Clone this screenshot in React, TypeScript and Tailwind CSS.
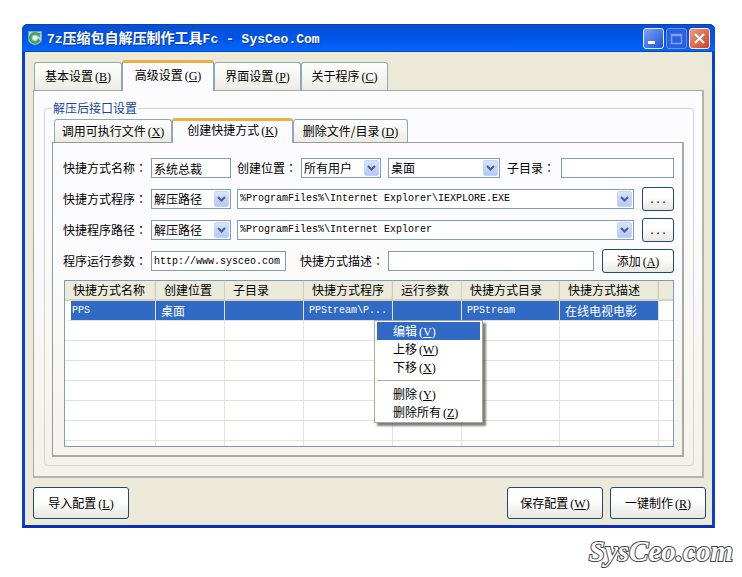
import { useState, type ReactNode } from "react";
import clsx from "clsx";

const mainTabs = [
  { label: "基本设置", hotkey: "B", width: "w-[88px]" },
  { label: "高级设置", hotkey: "G", width: "w-[92px]" },
  { label: "界面设置", hotkey: "P", width: "w-[87px]" },
  { label: "关于程序", hotkey: "C", width: "w-[87px]" },
];

const innerTabs = [
  { label: "调用可执行文件", hotkey: "X", width: "w-[118px]" },
  { label: "创建快捷方式", hotkey: "K", width: "w-[121px]" },
  { label: "删除文件/目录", hotkey: "D", width: "w-[115px]" },
];

const columns = [
  { title: "快捷方式名称", width: "w-[91px]" },
  { title: "创建位置", width: "w-[69px]" },
  { title: "子目录", width: "w-[79px]" },
  { title: "快捷方式程序", width: "w-[89px]" },
  { title: "运行参数", width: "w-[69px]" },
  { title: "快捷方式目录", width: "w-[98px]" },
  { title: "快捷方式描述", width: "w-[99px]" },
];

const record = [
  { text: "PPS", latin: true },
  { text: "桌面", latin: false },
  { text: "", latin: false },
  { text: "PPStream\\P...", latin: true },
  { text: "", latin: false },
  { text: "PPStream", latin: true },
  { text: "在线电视电影", latin: false },
];

const LATIN = "font-['Liberation_Mono','Noto_Sans_CJK_SC',monospace] text-[10px]";

function Hotkey({ letter }: { letter: string }) {
  return (
    <span className="pl-[2px] font-['Liberation_Serif',serif]">
      (<span className="underline underline-offset-1">{letter}</span>)
    </span>
  );
}

type Tab = { label: string; hotkey: string; width: string };

function Tabs({
  tabs,
  active,
  onSelect,
  small,
}: {
  tabs: Tab[];
  active: number;
  onSelect: (i: number) => void;
  small?: boolean;
}) {
  return (
    <div role="tablist" className={clsx("flex items-end", small ? "pl-[2px]" : "pl-px")}>
      {tabs.map((t, i) => (
        <button
          key={t.label}
          type="button"
          role="tab"
          aria-selected={i === active}
          onClick={() => onSelect(i)}
          className={clsx(
            "shrink-0 whitespace-nowrap rounded-t-[3px] border border-b-0 border-[#91a7b4]",
            t.width,
            i === active
              ? "relative z-10 -mb-px border-t-[3px] border-t-[#eeb042] bg-[#fcfcfe]"
              : "bg-linear-to-b from-white to-[#ecebe4]",
            i === active ? (small ? "h-[25px] pb-[3px]" : "h-[31px] pb-[3px]") : small ? "h-[23px]" : "h-7"
          )}
        >
          {t.label}
          <Hotkey letter={t.hotkey} />
        </button>
      ))}
    </div>
  );
}

function XpButton({ className, label, children }: { className: string; label?: string; children: ReactNode }) {
  return (
    <button
      type="button"
      aria-label={label}
      className={clsx(
        "shrink-0 whitespace-nowrap rounded-[3px] border border-[#1d4a70] bg-linear-to-b from-white from-40% to-[#e8e7e0]",
        className
      )}
    >
      {children}
    </button>
  );
}

// The TC face centres the full-width colon in its cell
function FieldLabel({ htmlFor, text, className }: { htmlFor: string; text: string; className: string }) {
  return (
    <label htmlFor={htmlFor} className={clsx("shrink-0 whitespace-nowrap", className)}>
      {text}
      <span lang="zh-Hant" className="font-['Noto_Sans_CJK_TC',sans-serif]">：</span>
    </label>
  );
}

function Select({
  id,
  label,
  value,
  latin,
  className,
}: {
  id: string;
  label?: string;
  value: string;
  latin?: boolean;
  className: string;
}) {
  return (
    <div className={clsx("relative", className)}>
      <select
        id={id}
        aria-label={label}
        className={clsx(
          "block h-5 w-full appearance-none border border-[#7f9db9] bg-white pl-[2px] pr-5 text-black outline-none",
          latin && LATIN
        )}
      >
        <option>{value}</option>
      </select>
      <svg
        viewBox="0 0 15 16"
        className="pointer-events-none absolute right-[2px] top-[2px] h-4 w-[15px]"
        aria-hidden="true"
      >
        <defs>
          <linearGradient id={id + "-fill"} x1="0" y1="0" x2="0" y2="1">
            <stop offset="0" stopColor="#d8e4fe" />
            <stop offset="1" stopColor="#b1c8f8" />
          </linearGradient>
        </defs>
        <rect x="0.5" y="0.5" width="14" height="15" rx="1.5" fill={`url(#${id}-fill)`} stroke="#c3d3fb" />
        <path d="M4 6l3.5 3.5L11 6" fill="none" stroke="#4d6185" strokeWidth="2.2" />
      </svg>
    </div>
  );
}

function TextBox({
  id,
  value,
  latin,
  className,
}: {
  id: string;
  value?: string;
  latin?: boolean;
  className: string;
}) {
  return (
    <input
      id={id}
      type="text"
      defaultValue={value}
      className={clsx(
        "h-5 min-w-0 border border-[#7f9db9] bg-white px-[2px] text-black outline-none",
        latin && LATIN,
        className
      )}
    />
  );
}

function TitleBar() {
  const box = "flex size-[21px] items-center justify-center rounded-[3px] border";
  return (
    <header className="flex h-7 items-center rounded-t-[6px] bg-linear-to-b from-[#0a4fd0] via-[#0055e8] to-[#0466fb] pl-[5px] pr-[5px] shadow-[inset_0_1px_0_#0a3fb8,inset_0_-1px_0_#0447c4]">
      <svg viewBox="0 0 16 16" className="mr-1 size-4" aria-hidden="true">
        <path d="M1.5 1.5h13v8.5c0 2-3 4-6.500 5-3.500-1-6.500-3-6.500-5z" fill="#b9cfd2" stroke="#7ea3b8" strokeWidth="0.8" />
        <path d="M11.500 5a4.600 4.600 0 1 0 .8 4.500" fill="none" stroke="#3fa558" strokeWidth="2.600" />
        <path d="M9 3l4.500 0-.8 4.500z" fill="#3fa558" />
        <circle cx="7.800" cy="7.800" r="2" fill="#f4fff4" />
      </svg>
      <h1 className="flex-1 whitespace-nowrap font-['Noto_Sans_CJK_SC',sans-serif] text-sm font-bold text-white [text-shadow:1px_1px_0_#0a3a9c]">
        <span className="font-['Liberation_Mono',monospace] text-[13px]">7z</span>
        压缩包自解压制作工具
        <span className="font-['Liberation_Mono',monospace] text-[13px]">Fc - SysCeo.Com</span>
      </h1>
      <div className="flex gap-[2px]">
        <button type="button" aria-label="最小化" className={clsx(box, "border-[#e4ecff] bg-linear-to-br from-[#7ba0f4] to-[#1f4fd8]")}>
          <svg viewBox="0 0 19 19" className="size-[19px]" aria-hidden="true">
            <path d="M4 12h7v3H4z" fill="#fff" />
          </svg>
        </button>
        <button type="button" aria-label="最大化" disabled className={clsx(box, "border-[#6f97ee] bg-[#2a5fe0]")}>
          <svg viewBox="0 0 19 19" className="size-[19px]" aria-hidden="true">
            <path d="M4.500 5.500h10v9h-10zM4 6.500h11" fill="none" stroke="#7fa3f2" strokeWidth="1.400" />
          </svg>
        </button>
        <button type="button" aria-label="关闭" className={clsx(box, "border-[#ffe4dc] bg-linear-to-br from-[#f09a7c] to-[#cc3f18]")}>
          <svg viewBox="0 0 19 19" className="size-[19px]" aria-hidden="true">
            <path d="M5 5l9 9M14 5l-9 9" stroke="#fff" strokeWidth="2.200" />
          </svg>
        </button>
      </div>
    </header>
  );
}

function ShortcutForm() {
  const row = "flex h-6 items-center";
  return (
    <div className="flex flex-col gap-[7px]">
      <div className={row}>
        <FieldLabel htmlFor="name" text="快捷方式名称" className="w-[88px]" />
        <TextBox id="name" value="系统总裁" className="w-20" />
        <FieldLabel htmlFor="place" text="创建位置" className="ml-[6px] w-16" />
        <Select id="place" value="所有用户" className="w-20" />
        <Select id="place-dir" label="位置" value="桌面" className="ml-[7px] w-28" />
        <FieldLabel htmlFor="subdir" text="子目录" className="ml-[7px] w-[54px]" />
        <TextBox id="subdir" className="flex-1" />
      </div>
      <div className={row}>
        <FieldLabel htmlFor="program" text="快捷方式程序" className="w-[88px]" />
        <Select id="program" value="解压路径" className="w-20" />
        <Select
          id="program-path"
          label="程序"
          value="%ProgramFiles%\Internet Explorer\IEXPLORE.EXE"
          latin
          className="ml-[6px] flex-1"
        />
        <XpButton label="浏览程序" className="ml-2 h-6 w-8">
          <span className={LATIN}>...</span>
        </XpButton>
      </div>
      <div className={row}>
        <FieldLabel htmlFor="path" text="快捷程序路径" className="w-[88px]" />
        <Select id="path" value="解压路径" className="w-20" />
        <Select
          id="path-value"
          label="路径"
          value="%ProgramFiles%\Internet Explorer"
          latin
          className="ml-[6px] flex-1"
        />
        <XpButton label="浏览路径" className="ml-2 h-6 w-8">
          <span className={LATIN}>...</span>
        </XpButton>
      </div>
      <div className={row}>
        <FieldLabel htmlFor="args" text="程序运行参数" className="w-[88px]" />
        <TextBox id="args" value="http://www.sysceo.com" latin className="w-[135px]" />
        <FieldLabel htmlFor="desc" text="快捷方式描述" className="ml-[14px] w-[88px]" />
        <TextBox id="desc" className="flex-1" />
        <XpButton className="ml-2 h-6 w-[72px]">
          添加<Hotkey letter="A" />
        </XpButton>
      </div>
    </div>
  );
}

function ContextMenu() {
  const item = "block h-[18px] w-full whitespace-nowrap pl-4 text-left leading-[18px] hover:bg-[#316ac5] hover:text-white";
  return (
    <div
      role="menu"
      className="absolute left-[309px] top-[39px] w-[109px] border border-[#aca899] bg-white px-[2px] py-px shadow-[3px_3px_2px_#00000080]"
    >
      <button type="button" role="menuitem" className={clsx(item, "bg-[#316ac5] text-white")}>
        编辑<Hotkey letter="V" />
      </button>
      <button type="button" role="menuitem" className={item}>上移<Hotkey letter="W" /></button>
      <button type="button" role="menuitem" className={item}>下移<Hotkey letter="X" /></button>
      <hr className="my-1 border-[#aca899]" />
      <button type="button" role="menuitem" className={item}>删除<Hotkey letter="Y" /></button>
      <button type="button" role="menuitem" className={item}>删除所有<Hotkey letter="Z" /></button>
    </div>
  );
}

function ShortcutTable() {
  return (
    <div className="relative ml-px mt-[7px] border border-[#7f9db9] bg-white">
      <table className="w-full table-fixed border-separate border-spacing-0">
        <thead>
          <tr className="h-5">
            {columns.map((c) => (
              <th
                key={c.title}
                scope="col"
                className={clsx(
                  "whitespace-nowrap border-b-2 border-b-[#d6d2c2] bg-[#ebeadb] bg-linear-to-r from-[#ebeadb] from-98% to-[#c4c0b0] to-100% p-0 pl-2 text-left font-normal leading-[18px]",
                  c.width
                )}
              >
                {c.title}
              </th>
            ))}
            <th aria-label="空" className="border-b-2 border-b-[#d6d2c2] bg-[#ebeadb] p-0" />
          </tr>
        </thead>
        <tbody>
          <tr className="h-5">
            {record.map((cell, i) => (
              <td
                key={i}
                className={clsx(
                  "whitespace-nowrap border-b border-r border-b-[#e4e2dc] border-r-[#e4e2dc] bg-[#316ac5] bg-clip-padding p-0 leading-[19px] text-white",
                  i === 0 ? "border-l-[6px] border-l-white pl-px" : "pl-[5px]",
                  cell.latin && LATIN
                )}
              >
                {cell.text}
              </td>
            ))}
            <td className="border-b border-[#e4e2dc] p-0" />
          </tr>
          {[0, 1, 2, 3, 4, 5].map((r) => (
            <tr key={r} className="h-5">
              {columns.map((c) => (
                <td key={c.title} className="border-b border-r border-[#e4e2dc] p-0" />
              ))}
              <td className="border-b border-[#e4e2dc] p-0" />
            </tr>
          ))}
          <tr className="h-[5px]">
            {columns.map((c) => (
              <td key={c.title} className="border-r border-[#e4e2dc] p-0" />
            ))}
            <td className="p-0" />
          </tr>
        </tbody>
      </table>
      <ContextMenu />
    </div>
  );
}

export default function App() {
  const [tab, setTab] = useState(1);
  const [inner, setInner] = useState(1);

  return (
    <div className="bg-white pb-2 pl-[22px] pr-[27px] pt-6 font-['Noto_Sans_CJK_SC',sans-serif] text-xs leading-4 text-black">
      <main className="rounded-t-[6px] bg-[#0831d9]">
        <TitleBar />
        <div className="border-x-[3px] border-b-[3px] border-x-[#0a3fd4] border-b-[#0a2fb0] bg-[#ece9d8] pb-[6px] pl-2 pr-[6px] pt-2">
          <div className="pr-[2px]">
            <Tabs tabs={mainTabs} active={tab} onSelect={setTab} />
            <section className="border border-b-2 border-r-2 border-[#a5a9a6] border-b-[#b5b4ab] border-r-[#b5b4ab] bg-linear-to-b from-[#fcfcfe] from-30% to-[#f3f2ea] pb-[10px] pl-[10px] pr-2 pt-[9px]">
              <fieldset className="min-w-0 rounded-[4px] border border-[#d5d4cb] pb-2 pl-[7px] pr-[9px]">
                <legend className="h-4 px-px text-[#15489c]">解压后接口设置</legend>
                <div className="pt-[2px]">
                  <Tabs tabs={innerTabs} active={inner} onSelect={setInner} small />
                  <div className="border border-b-2 border-r-2 border-[#919b9c] border-b-[#a9aaa4] border-r-[#a9aaa4] bg-linear-to-b from-[#fcfcfe] from-30% to-[#f4f3ec] pb-2 pl-[10px] pr-2 pt-[13px]">
                    <ShortcutForm />
                    <ShortcutTable />
                  </div>
                </div>
              </fieldset>
            </section>
          </div>
          <footer className="mt-[9px] flex gap-[7px]">
            <XpButton className="h-8 w-24">导入配置<Hotkey letter="L" /></XpButton>
            <span className="flex-1" />
            <XpButton className="h-8 w-24">保存配置<Hotkey letter="W" /></XpButton>
            <XpButton className="h-8 w-24">一键制作<Hotkey letter="R" /></XpButton>
          </footer>
        </div>
      </main>
      <p className="-mr-[18px] mt-[7px] text-right font-['Liberation_Serif',serif] text-[29px] font-bold italic leading-8 text-white [-webkit-text-stroke:2px_#444] [paint-order:stroke_fill]">
        SysCeo.com
      </p>
    </div>
  );
}
